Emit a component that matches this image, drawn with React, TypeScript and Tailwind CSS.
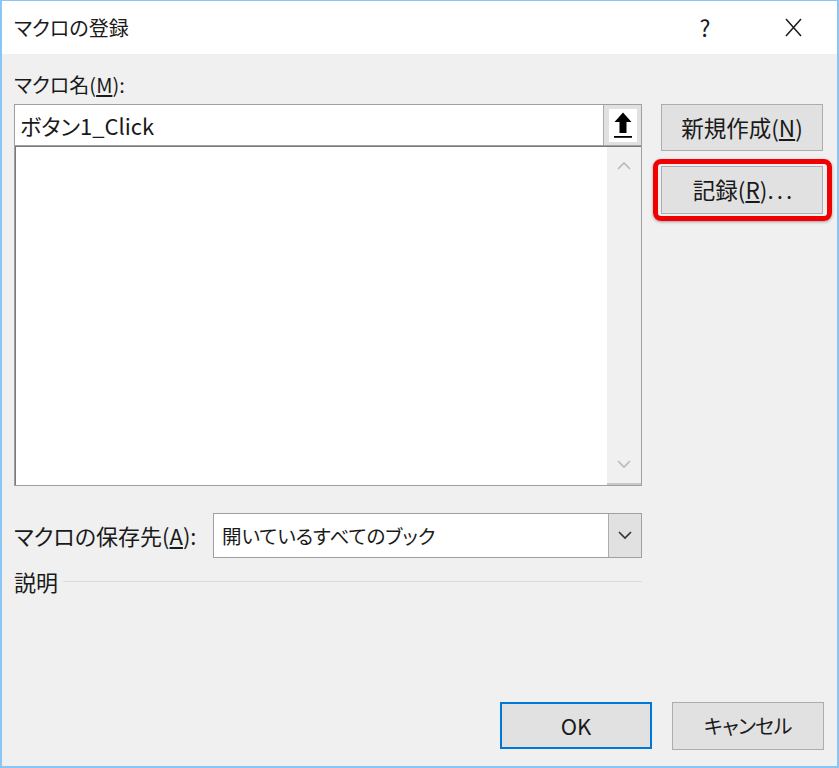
import React from "react";

const font = "font-['Noto_Sans_CJK_JP',sans-serif] [font-feature-settings:'palt']";

function Chevron({ dir, color }: { dir: "up" | "down"; color: string }) {
  return (
    <svg width="14" height="9" viewBox="0 0 14 9">
      <polyline
        points={dir === "up" ? "1,8 7,2 13,8" : "1,1 7,7 13,1"}
        fill="none"
        stroke={color}
        strokeWidth="1.6"
      />
    </svg>
  );
}

function Button({ children, className = "" }: { children: React.ReactNode; className?: string }) {
  return (
    <div
      className={`flex items-center justify-center bg-[#e1e1e1] border border-[#adadad] text-[#1a1a1a] ${className}`}
    >
      {children}
    </div>
  );
}

export default function App() {
  return (
    <div
      className={`${font} w-[839px] h-[768px] bg-[#f0f0f0] border-t border-x-2 border-b-2 border-[#8cc4f3] flex flex-col text-[#1a1a1a]`}
    >
      {/* title bar */}
      <div className="h-[53px] bg-white flex items-center pl-[12px] shrink-0">
        <span className="text-[20px]">マクロの登録</span>
        <span className="ml-auto text-[23px] w-[20px] text-center mr-[70px]">?</span>
        <svg width="17" height="19" viewBox="0 0 17 19" className="mr-[35px]">
          <path d="M1 1 L16 18 M16 1 L1 18" stroke="#1a1a1a" strokeWidth="1.5" />
        </svg>
      </div>

      <div className="flex-1 flex flex-col pl-[12px] pr-[13px] pb-[16px]">
        <div className="flex gap-[19px] pt-[19px]">
          {/* left column */}
          <div className="w-[628px] flex flex-col">
            <div className="text-[20px] leading-[24px] h-[24px]">
              マクロ名(<span className="underline underline-offset-2">M</span>):
            </div>
            <div className="mt-[7px] border border-[#a0a0a0] bg-white flex flex-col">
              <div className="h-[41px] flex border-b border-[#a0a0a0]">
                <div className="flex-1 flex items-center pl-[5px] text-[22px]">ボタン1_Click</div>
                <div className="w-[38px] bg-[#e1e1e1] border-l border-[#adadad] flex items-center justify-center">
                  <div className="w-[28px] h-[33px] bg-white flex items-center justify-center">
                    <svg width="22" height="28" viewBox="0 0 22 28">
                      <path d="M11 1.5 L2.5 11 L7.5 11 L7.5 22 L14.5 22 L14.5 11 L19.5 11 Z" fill="#000" />
                      <rect x="2" y="25" width="18" height="1.8" fill="#000" />
                    </svg>
                  </div>
                </div>
              </div>
              <div className="h-[339px] flex border-l border-t border-[#7a7a7a] shadow-[inset_0_-2px_0_#c8c8c8]">
                <div className="flex-1 bg-white" />
                <div className="w-[34px] bg-[#f0f0f0] flex flex-col items-center justify-between py-[14px] mb-[2px]">
                  <Chevron dir="up" color="#b9b9b9" />
                  <Chevron dir="down" color="#b9b9b9" />
                </div>
              </div>
            </div>

            <div className="mt-[27px] flex items-center">
              <div className="w-[199px] text-[22px]">
                マクロの保存先(<span className="underline underline-offset-2">A</span>):
              </div>
              <div className="flex-1 h-[45px] bg-white border border-[#a0a0a0] flex">
                <div className="flex-1 flex items-center pl-[8px] text-[19.5px]">開いているすべてのブック</div>
                <div className="w-[33px] bg-[#e1e1e1] border-l border-[#adadad] flex items-center justify-center">
                  <Chevron dir="down" color="#333" />
                </div>
              </div>
            </div>

            <div className="mt-[10px] flex items-center gap-[5px]">
              <span className="text-[22px] leading-[26px]">説明</span>
              <div className="flex-1 h-px bg-[#dcdcdc]" />
            </div>
          </div>

          {/* right column */}
          <div className="w-[162px] flex flex-col pt-[31px]">
            <Button className="h-[47px] text-[22.5px]">
              新規作成(<span className="underline underline-offset-2">N</span>)
            </Button>
            <div className="relative mt-[15px]">
              <Button className="h-[48px] text-[22.5px]">
                <span className="pl-[4px]">
                  記録(<span className="underline underline-offset-2">R</span>)
                  <span className="tracking-[3px]">...</span>
                </span>
              </Button>
              <div className="absolute -left-[8px] -top-[7px] -right-[9px] -bottom-[7px] border-[5px] border-[#f00000] rounded-[8px] shadow-[0_1px_3px_rgba(0,0,0,0.35)] pointer-events-none" />
            </div>
          </div>
        </div>

        <div className="mt-auto flex justify-end gap-[20px]">
          <Button className="w-[152px] h-[47px] !border-2 !border-[#0078d7] text-[22px]">OK</Button>
          <Button className="w-[152px] h-[48px] text-[20px] tracking-[-0.5px]">キャンセル</Button>
        </div>
      </div>
    </div>
  );
}
